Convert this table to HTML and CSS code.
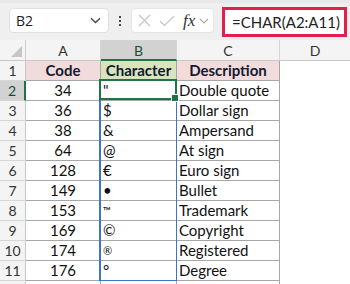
FILE: index.html
```html
<!DOCTYPE html>
<html>
<head>
<meta charset="utf-8">
<link rel="stylesheet" href="styles.css">
</head>
<body>
<div class="app">
  <div class="toolbar">
    <div class="namebox">
      <span class="namebox-text">B2</span>
      <svg class="chev" width="11" height="7" viewBox="0 0 11 7"><path d="M1 1.2 L5.5 5.5 L10 1.2" fill="none" stroke="#444" stroke-width="1.3"/></svg>
    </div>
    <div class="vdots">
      <span class="dot"></span><span class="dot"></span><span class="dot"></span>
    </div>
    <div class="fbtns">
      <svg class="xicon" width="13" height="13" viewBox="0 0 13 13"><path d="M1 1 L12 12 M12 1 L1 12" stroke="#c4c4c4" stroke-width="1.2" fill="none"/></svg>
      <svg class="checkicon" width="16" height="12" viewBox="0 0 16 12"><path d="M1 6 L5.5 10.5 L15 1" stroke="#c4c4c4" stroke-width="1.2" fill="none"/></svg>
      <span class="fx">fx</span>
      <svg class="chev2" width="10" height="6" viewBox="0 0 10 6"><path d="M1 1 L5 5 L9 1" fill="none" stroke="#aaa" stroke-width="1.1"/></svg>
    </div>
    <div class="formula">=CHAR(A2:A11)</div>
  </div>

  <div class="sheet">
    <div class="corner"><svg width="11" height="11" viewBox="0 0 11 11"><path d="M11 0 L11 11 L0 11 Z" fill="#c6c6c6"/></svg></div>
    <div class="colhdr">A</div>
    <div class="colhdr sel">B</div>
    <div class="colhdr">C</div>
    <div class="colhdr last">D</div>

    <div class="rowhdr">1</div>
    <div class="cell th pink">Code</div>
    <div class="cell th green">Character</div>
    <div class="cell th pink">Description</div>
    <div class="cell empty"></div>

    <div class="rowhdr sel">2</div>
    <div class="cell num">34</div>
    <div class="cell ch active">"<div class="spill"></div><div class="selection"></div></div>
    <div class="cell">Double quote</div>
    <div class="cell empty"></div>

    <div class="rowhdr">3</div>
    <div class="cell num">36</div>
    <div class="cell ch">$</div>
    <div class="cell">Dollar sign</div>
    <div class="cell empty"></div>

    <div class="rowhdr">4</div>
    <div class="cell num">38</div>
    <div class="cell ch">&amp;</div>
    <div class="cell">Ampersand</div>
    <div class="cell empty"></div>

    <div class="rowhdr">5</div>
    <div class="cell num">64</div>
    <div class="cell ch">@</div>
    <div class="cell">At sign</div>
    <div class="cell empty"></div>

    <div class="rowhdr">6</div>
    <div class="cell num">128</div>
    <div class="cell ch">€</div>
    <div class="cell">Euro sign</div>
    <div class="cell empty"></div>

    <div class="rowhdr">7</div>
    <div class="cell num">149</div>
    <div class="cell ch">•</div>
    <div class="cell">Bullet</div>
    <div class="cell empty"></div>

    <div class="rowhdr">8</div>
    <div class="cell num">153</div>
    <div class="cell ch small">™</div>
    <div class="cell">Trademark</div>
    <div class="cell empty"></div>

    <div class="rowhdr">9</div>
    <div class="cell num">169</div>
    <div class="cell ch">©</div>
    <div class="cell">Copyright</div>
    <div class="cell empty"></div>

    <div class="rowhdr">10</div>
    <div class="cell num">174</div>
    <div class="cell ch small">®</div>
    <div class="cell">Registered</div>
    <div class="cell empty"></div>

    <div class="rowhdr">11</div>
    <div class="cell num">176</div>
    <div class="cell ch">°</div>
    <div class="cell">Degree</div>
    <div class="cell empty"></div>

    <div class="rowhdr"></div>
    <div class="cell blank"></div>
    <div class="cell blank"></div>
    <div class="cell blank"></div>
    <div class="cell empty"></div>
  </div>
</div>
</body>
</html>
```

FILE: styles.css
```css
* { box-sizing: border-box; }
html, body { margin: 0; padding: 0; background: #fff; }
body { width: 350px; height: 284px; overflow: hidden; font-family: "Lato", "Open Sans", sans-serif; }

.app { display: flex; flex-direction: column; }

.toolbar {
  height: 40px;
  background: #efefef;
  border-top: 3px solid #e8e8e8;
  display: flex;
  align-items: flex-start;
  padding-top: 5px;
  padding-left: 9px;
}

.namebox {
  width: 100px;
  height: 25px;
  background: #fff;
  border: 1px solid #e0e0e0;
  border-radius: 4px;
  display: flex;
  align-items: center;
  justify-content: space-between;
  padding: 0 7px 0 6px;
}
.namebox-text { font-family: "Open Sans", sans-serif; font-size: 14px; color: #222; }

.vdots {
  width: 22px;
  height: 25px;
  display: flex;
  flex-direction: column;
  align-items: center;
  justify-content: center;
  gap: 2px;
}
.dot { width: 2px; height: 2px; background: #444; display: block; }

.fbtns {
  width: 83px;
  height: 25px;
  background: #fff;
  border: 1px solid #e6e6e6;
  border-radius: 4px;
  display: flex;
  align-items: center;
  padding-left: 6px;
}
.xicon { margin-right: 8px; }
.checkicon { margin-right: 8px; }
.fx {
  font-family: "Liberation Serif", serif;
  font-style: italic;
  font-size: 17px;
  color: #333;
  margin-right: 4px;
  line-height: 1;
}

.formula {
  margin-left: 8px;
  margin-top: -1px;
  width: 125px;
  height: 30px;
  border: 3px solid #e3204d;
  background: #fff;
  font-family: "Lato", sans-serif;
  font-size: 15px;
  color: #222;
  display: flex;
  align-items: center;
  padding-left: 7px;
  white-space: nowrap;
}

.sheet {
  display: grid;
  grid-template-columns: 26px 75px 76px 103px 1fr;
  grid-template-rows: 21px repeat(12, 20px);
  font-size: 15px;
  color: #111;
}

.corner {
  background: #f4f4f4;
  border-right: 1px solid #d0d0d0;
  border-bottom: 1px solid #c8c8c8;
  display: flex;
  align-items: flex-end;
  justify-content: flex-end;
  padding: 0 3px 3px 0;
}

.colhdr {
  background: #f4f4f4;
  border-right: 1px solid #d4d4d4;
  border-bottom: 1px solid #c8c8c8;
  display: flex;
  align-items: center;
  justify-content: center;
  font-size: 14px;
  color: #333;
  padding-top: 1px;
}
.colhdr.last { border-right: none; }
.colhdr.sel {
  background: #d2d2d2;
  border-bottom: 2px solid #217346;
  color: #1b4d33;
}

.rowhdr {
  background: #f4f4f4;
  border-right: 1px solid #c8c8c8;
  border-bottom: 1px solid #d6d6d6;
  display: flex;
  align-items: center;
  justify-content: center;
  font-size: 14px;
  color: #333;
}
.rowhdr.sel {
  background: #d2d2d2;
  border-right: 2px solid #217346;
  color: #1b4d33;
}

.cell {
  border-right: 1px solid #a6a6a6;
  border-bottom: 1px solid #a6a6a6;
  display: flex;
  align-items: center;
  padding-left: 2px;
  white-space: nowrap;
  overflow: hidden;
  line-height: 1;
}
.cell.empty { border: none; }
.cell.blank { border-bottom: none; }
.cell.th { justify-content: center; font-weight: 700; color: #131a33; padding-left: 0; }
.cell.pink { background: #f2dcdb; }
.cell.green { background: #d8e4bc; }
.cell.num { justify-content: center; padding-left: 0; }
.cell.ch { padding-left: 2px; }
.cell.small { font-size: 11px; align-items: flex-start; padding-top: 4px; }
.cell.active { position: relative; overflow: visible; z-index: 2; }

.spill {
  position: absolute;
  left: -2px;
  top: -1px;
  width: 78px;
  height: 201px;
  border: 1px solid #3b73d0;
  border-left-width: 2px;
  border-top: none;
  pointer-events: none;
}

.selection {
  position: absolute;
  left: -2px;
  top: -2px;
  width: 78px;
  height: 21px;
  border: 2px solid #217346;
  pointer-events: none;
}
.selection::after {
  content: "";
  position: absolute;
  right: -4px;
  bottom: -4px;
  width: 6px;
  height: 6px;
  background: #217346;
  border: 1px solid #fff;
}
```
